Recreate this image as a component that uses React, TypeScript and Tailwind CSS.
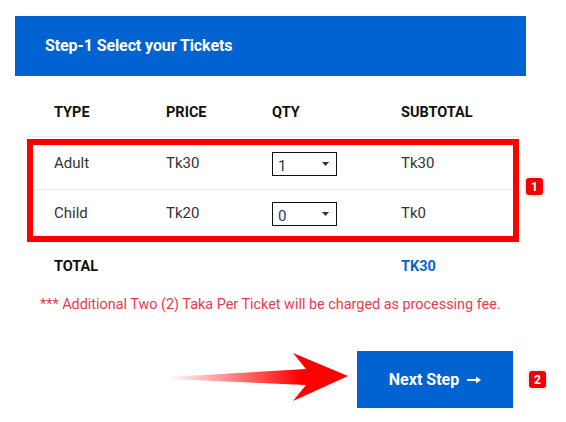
import React from "react";

const rows = [
  { type: "Adult", price: "Tk30", qty: "1", subtotal: "Tk30" },
  { type: "Child", price: "Tk20", qty: "0", subtotal: "Tk0" },
];

function Badge({ n }: { n: string }) {
  return (
    <span className="flex h-[17px] w-[17px] items-center justify-center rounded-[3px] bg-[#f00000] text-[12px] font-bold leading-none text-white shadow-[0_0_0_2px_#eeeeee]">
      {n}
    </span>
  );
}

function QtySelect({ value }: { value: string }) {
  return (
    <div className="flex h-[24px] w-[65px] items-center justify-between border border-[#111] pl-[5px] pr-[7px] text-[15px] text-[#1a3a6b]">
      <span className="pt-[3px]">{value}</span>
      <svg width="7" height="4" viewBox="0 0 7 4">
        <path d="M0 0 L7 0 L3.5 4 Z" fill="#333" />
      </svg>
    </div>
  );
}

export default function App() {
  return (
    <div className="min-h-[422px] w-[566px] bg-white font-['Roboto',sans-serif] text-[#222]">
      <div className="pt-[16px] pl-[15px]">
        <div className="flex h-[60px] w-[511px] items-center bg-[#0063d1] px-[30px]">
          <h2 className="text-[16px] font-bold tracking-[-0.1px] text-white">Step-1 Select your Tickets</h2>
        </div>
      </div>

      <div className="ml-[27px] w-[492px]">
        <div className="grid h-[61px] grid-cols-[112px_106px_129px_1fr] items-center border-b border-[#e3e6ea] pl-[27px] pt-[14px] text-[14.5px] font-bold text-[#111]">
          <span>TYPE</span>
          <span>PRICE</span>
          <span>QTY</span>
          <span>SUBTOTAL</span>
        </div>
      </div>

      <div className="mt-[2px] flex items-center">
        <div className="ml-[27px] w-[492px] border-[6px] border-[#ff0000]">
          <div className="grid h-[45px] grid-cols-[112px_106px_129px_1fr] items-start border-y border-[#e9ecef] pl-[21px] pt-[6px] text-[15px] leading-[20px] text-[#333]">
            <span className="pt-[1px]">{rows[0].type}</span>
            <span className="pt-[1px]">{rows[0].price}</span>
            <QtySelect value={rows[0].qty} />
            <span className="pt-[1px]">{rows[0].subtotal}</span>
          </div>
          <div className="grid h-[46px] grid-cols-[112px_106px_129px_1fr] items-start pl-[21px] pt-[12px] text-[15px] leading-[20px] text-[#333]">
            <span className="pt-[1px]">{rows[1].type}</span>
            <span className="pt-[1px]">{rows[1].price}</span>
            <QtySelect value={rows[1].qty} />
            <span className="pt-[1px]">{rows[1].subtotal}</span>
          </div>
        </div>
        <div className="ml-[7px] -mt-[8px]">
          <Badge n="1" />
        </div>
      </div>

      <div className="mt-[14px] ml-[54px] grid h-[20px] grid-cols-[347px_1fr] items-center text-[14.5px] font-bold">
        <span className="text-[#111]">TOTAL</span>
        <span className="text-[#0b63cf]">TK30</span>
      </div>

      <p className="mt-[20px] ml-[40px] text-[14.4px] leading-[18px] text-[#ea3b4f]">
        *** Additional Two (2) Taka Per Ticket will be charged as processing fee.
      </p>

      <div className="mt-[37px] flex items-center">
        <svg className="ml-[160px]" width="192" height="57" viewBox="160 351 192 57">
          <defs>
            <linearGradient id="ag" x1="168" y1="0" x2="300" y2="0" gradientUnits="userSpaceOnUse">
              <stop offset="0" stopColor="#ff0000" stopOpacity="0" />
              <stop offset="1" stopColor="#ff0000" stopOpacity="1" />
            </linearGradient>
          </defs>
          <polygon
            points="168,377 306,369 293,353 348,376 293,401 306,385 168,379"
            fill="url(#ag)"
          />
        </svg>
        <button className="ml-[5px] flex h-[57px] w-[156px] items-center justify-center bg-[#0063d1] text-[16px] font-bold text-white">
          Next Step
          <svg className="ml-[8px] mt-[1px]" width="14" height="8" viewBox="0 0 14 8">
            <path d="M0 4 H10" stroke="white" strokeWidth="2" />
            <path d="M9 0.5 L14 4 L9 7.5 Z" fill="white" />
          </svg>
        </button>
        <div className="ml-[16px]">
          <Badge n="2" />
        </div>
      </div>
    </div>
  );
}
